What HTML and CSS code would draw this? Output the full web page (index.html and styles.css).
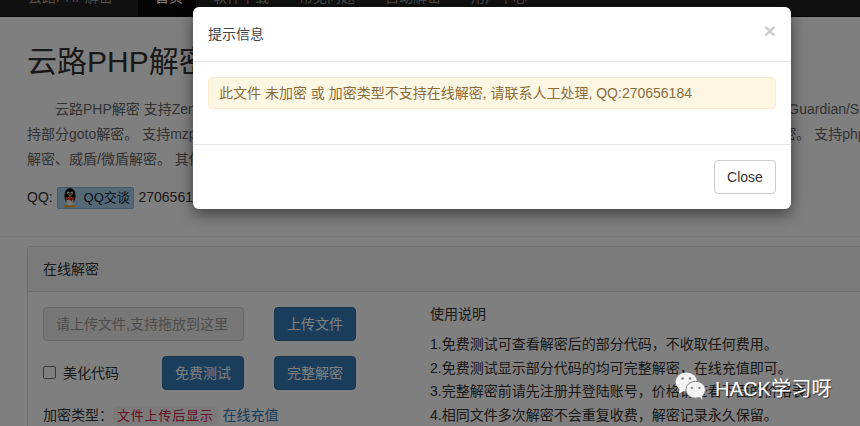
FILE: index.html
```html
<!DOCTYPE html>
<html lang="zh">
<head>
<meta charset="utf-8">
<title>云路PHP解密</title>
<link rel="stylesheet" href="styles.css">
</head>
<body>
<nav class="navbar">
  <a class="brand">云路PHP解密</a>
  <a class="nav-item active">首页</a>
  <a class="nav-item">软件下载</a>
  <a class="nav-item">常见问题</a>
  <a class="nav-item">自动解密</a>
  <a class="nav-item">用户中心</a>
</nav>
<main class="page">
  <h1 class="title">云路PHP解密工具</h1>
  <p class="intro"><span class="indent"></span>云路PHP解密 支持Zend/SourceGuardian解密，支持ionCube解密，支持SG11解密，支持SG解密 支持Zend解密，支持Guardian/SG解密，支<br>持部分goto解密。 支持mzphp解密，支持phpjm解密，支持sg解密，支持pm9解密，支持魔方解密，支持enPhP解密，并解密。 支持php<br>解密、威盾/微盾解密。 其他类型解密请联系客服人工处理，欢迎咨询。</p>
  <p class="qq">QQ: <span class="qq-badge"><svg class="penguin" viewBox="0 0 16 20" width="16" height="20"><ellipse cx="8" cy="8" rx="5.6" ry="8" fill="#111"/><ellipse cx="8" cy="13" rx="3.6" ry="4.6" fill="#f4f4f4"/><circle cx="6.3" cy="5" r="1.2" fill="#fff"/><circle cx="9.7" cy="5" r="1.2" fill="#fff"/><circle cx="6.5" cy="5.2" r=".5" fill="#111"/><circle cx="9.5" cy="5.2" r=".5" fill="#111"/><path d="M5.8 6.6h4.4L8 8.4z" fill="#f5a623"/><path d="M3 9.2h10l-.6 2-2.4.6.6 2.6-2.4-2.2-5-.6z" fill="#d8311e"/><ellipse cx="5" cy="18.2" rx="3" ry="1.3" fill="#f5a623"/><ellipse cx="11" cy="18.2" rx="3" ry="1.3" fill="#f5a623"/></svg><span class="qq-label">QQ交谈</span></span> 270656184</p>
  <hr class="rule">
  <section class="panel">
    <div class="panel-head">在线解密</div>
    <div class="panel-body">
      <div class="form-col">
        <div class="form-row">
          <div class="fake-input">请上传文件,支持拖放到这里</div>
          <button class="btn">上传文件</button>
        </div>
        <div class="form-row">
          <label class="beautify"><span class="check"></span>美化代码</label>
          <button class="btn">免费测试</button>
          <button class="btn">完整解密</button>
        </div>
        <div class="type-row">加密类型：<code class="code">文件上传后显示</code> <a class="link">在线充值</a></div>
      </div>
      <div class="help-col">
        <div class="help-title">使用说明</div>
        <div class="help-line">1.免费测试可查看解密后的部分代码，不收取任何费用。</div>
        <div class="help-line">2.免费测试显示部分代码的均可完整解密，在线充值即可。</div>
        <div class="help-line">3.完整解密前请先注册并登陆账号，价格请查看下面的价格表。</div>
        <div class="help-line">4.相同文件多次解密不会重复收费，解密记录永久保留。</div>
      </div>
    </div>
  </section>
</main>
<div class="backdrop"></div>
<div class="modal">
  <div class="modal-head"><span class="modal-title">提示信息</span><span class="close-x">×</span></div>
  <div class="modal-body"><div class="alert">此文件 未加密 或 加密类型不支持在线解密, 请联系人工处理, QQ:270656184</div></div>
  <div class="modal-foot"><button class="close-btn">Close</button></div>
</div>
<div class="watermark">
  <svg viewBox="0 0 36 32" width="34" height="30"><ellipse cx="13" cy="11.5" rx="11.5" ry="10" fill="#f4f4f4"/><path d="M6 18l-1 6 6-3z" fill="#f4f4f4"/><circle cx="9" cy="8" r="1.4" fill="#808080"/><circle cx="17" cy="8" r="1.4" fill="#808080"/><ellipse cx="23" cy="20" rx="10.5" ry="9" fill="#f4f4f4" stroke="#808080" stroke-width="1"/><path d="M27 27l3 4 0-6z" fill="#f4f4f4"/><circle cx="19" cy="18" r="1.2" fill="#808080"/><circle cx="27" cy="18" r="1.2" fill="#808080"/></svg>
  <span class="wm-text">HACK学习呀</span>
</div>
</body>
</html>
```
FILE: styles.css
```css
* { box-sizing: border-box; }
html, body { margin: 0; height: 426px; overflow: hidden; }
body {
  background: #fff;
  color: #333;
  font: 14px/1.43 "Liberation Sans", "Noto Sans CJK SC", sans-serif;
  position: relative;
  width: 860px;
}
.navbar {
  height: 17px;
  background: #222;
  display: flex;
  overflow: hidden;
  color: #9d9d9d;
  line-height: 1;
  border-bottom: 1px solid #080808;
}
.brand { width: 138px; padding: 0 0 0 28px; margin-top: -10px; height: 26px; font-size: 14px; white-space: nowrap; }
.nav-item { padding: 0 15px; font-size: 14px; margin-top: -10px; height: 27px; white-space: nowrap; }
.nav-item.active { background: #080808; color: #fff; padding: 0 0 0 17px; width: 58px; }
.nav-item.active + .nav-item { margin-left: 2px; }
.page { height: 409px; overflow: hidden; padding-left: 27px; }
.title { margin: 27px 0 0; font-size: 30px; font-weight: 400; line-height: 36px; white-space: nowrap; height: 36px; }
.intro { margin: 17px 0 0; line-height: 25px; color: #666; width: 833px; height: 75px; white-space: nowrap; overflow: hidden; }
.indent { display: inline-block; width: 28px; }
.qq { margin: 13px 0 0; height: 24px; line-height: 24px; white-space: nowrap; }
.qq-badge {
  display: inline-flex; align-items: center; gap: 5px;
  height: 22px; width: 77px; padding-left: 4px; vertical-align: top; margin: 2px 1px 0 0;
  background: #a9d3ea; border: 1px solid #8db9d1; border-radius: 2px;
  color: #06223a; font-size: 13px;
}
.qq-label { margin-left: 1px; }
.rule { border: 0; border-top: 1px solid #eee; margin: 27px 0 0 -27px; height: 10px; }
.panel { border: 1px solid #ddd; border-right: 0; border-radius: 4px 0 0 4px; }
.panel-head { height: 45px; padding: 0 15px; line-height: 44px; background: #f5f5f5; border-bottom: 1px solid #ddd; }
.panel-body { display: flex; padding: 15px; }
.form-col { width: 387px; }
.form-row { display: flex; align-items: center; height: 34px; margin-bottom: 15px; }
.fake-input {
  width: 201px; height: 34px; padding: 0 12px; line-height: 32px;
  background: #eee; border: 1px solid #ccc; border-radius: 4px; color: #999; white-space: nowrap;
}
.btn {
  width: 82px; height: 34px; padding: 0; font: inherit; color: #fff;
  background: #337ab7; border: 1px solid #2e6da4; border-radius: 4px;
}
.form-row > .fake-input + .btn { margin-left: 30px; }
.form-row > .btn + .btn { margin-left: 30px; }
.beautify { display: flex; align-items: center; width: 119px; }
.check { width: 13px; height: 13px; border: 1px solid #767676; border-radius: 2px; background: #fff; margin-right: 7px; }
.type-row { white-space: nowrap; line-height: 20px; margin-top: 3px; }
.code { font: inherit; font-size: 13px; letter-spacing: .8px; color: #c7254e; background: #f9f2f4; border-radius: 4px; padding: 2px 4px; }
.link { color: #337ab7; margin-left: 1px; }
.help-title { line-height: 20px; margin: -3px 0 9px; }
.help-line { line-height: 23.5px; white-space: nowrap; }
.backdrop { position: absolute; inset: 0; background: rgba(0,0,0,.5); }
.modal {
  position: absolute; left: 193px; top: 7px; width: 598px; height: 202px;
  background: #fff; border-radius: 6px; box-shadow: 0 5px 15px rgba(0,0,0,.5);
  overflow: hidden;
}
.modal-head {
  height: 55px; padding: 0 15px; display: flex; justify-content: space-between;
  border-bottom: 1px solid #e5e5e5; line-height: 54px;
}
.modal-title { color: #444; }
.close-x { font-size: 21px; font-weight: 700; color: #000; opacity: .2; line-height: 48px; }
.modal-body { height: 82px; padding: 15px; }
.alert {
  height: 32px; line-height: 30px; padding: 0 10px;
  background: #fdf6e3; border: 1px solid #faebcc; border-radius: 4px; color: #8a6d3b; white-space: nowrap;
}
.modal-foot { height: 65px; border-top: 1px solid #e5e5e5; padding: 15px; text-align: right; }
.close-btn {
  width: 62px; height: 34px; padding: 0; font: inherit; color: #333;
  background: #fff; border: 1px solid #ccc; border-radius: 4px;
}
.watermark {
  position: absolute; left: 674px; top: 371px; display: flex; align-items: center; gap: 7px;
  color: #fff; font-size: 20.2px; line-height: 1; text-shadow: 1px 1px 1px rgba(0,0,0,.5); white-space: nowrap;
}
.wm-text { margin-top: 6px; }
```
